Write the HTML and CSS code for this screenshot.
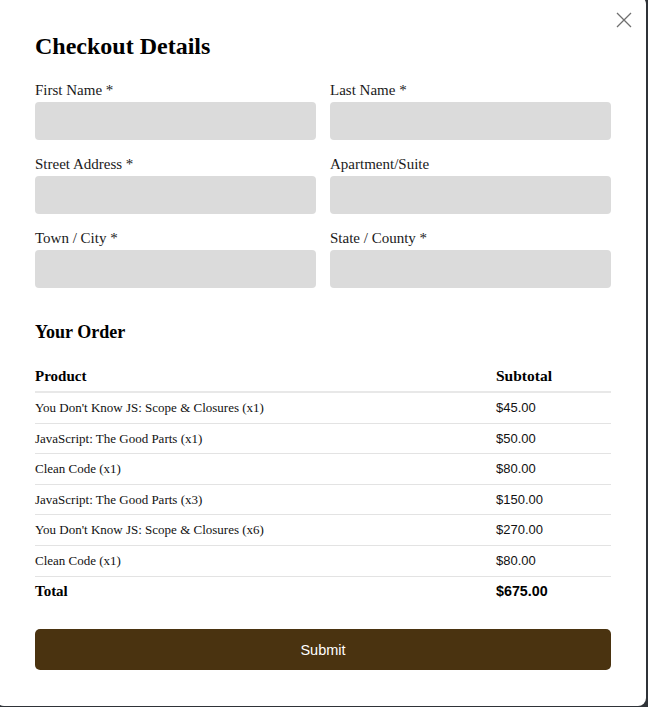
FILE: index.html
```html
<!DOCTYPE html>
<html lang="en">
<head>
<meta charset="utf-8">
<title>Checkout Details</title>
<link rel="stylesheet" href="styles.css">
</head>
<body>
<div class="modal">
  <button class="close" aria-label="Close">
    <svg width="16" height="16" viewBox="0 0 16 16"><path d="M1 1L15 15M15 1L1 15" stroke="#6f6f6f" stroke-width="1.3" fill="none"/></svg>
  </button>
  <h1 class="title">Checkout Details</h1>
  <form class="form">
    <div class="field"><label>First Name *</label><div class="input"></div></div>
    <div class="field"><label>Last Name *</label><div class="input"></div></div>
    <div class="field"><label>Street Address *</label><div class="input"></div></div>
    <div class="field"><label>Apartment/Suite</label><div class="input"></div></div>
    <div class="field"><label>Town / City *</label><div class="input"></div></div>
    <div class="field"><label>State / County *</label><div class="input"></div></div>
  </form>
  <h2 class="subtitle">Your Order</h2>
  <table class="order">
    <thead>
      <tr><th class="c-prod">Product</th><th class="c-sub">Subtotal</th></tr>
    </thead>
    <tbody>
      <tr><td class="c-prod">You Don't Know JS: Scope &amp; Closures (x1)</td><td class="c-sub price">$45.00</td></tr>
      <tr><td class="c-prod">JavaScript: The Good Parts (x1)</td><td class="c-sub price">$50.00</td></tr>
      <tr><td class="c-prod">Clean Code (x1)</td><td class="c-sub price">$80.00</td></tr>
      <tr><td class="c-prod">JavaScript: The Good Parts (x3)</td><td class="c-sub price">$150.00</td></tr>
      <tr><td class="c-prod">You Don't Know JS: Scope &amp; Closures (x6)</td><td class="c-sub price">$270.00</td></tr>
      <tr><td class="c-prod">Clean Code (x1)</td><td class="c-sub price">$80.00</td></tr>
      <tr class="total"><td class="c-prod">Total</td><td class="c-sub price">$675.00</td></tr>
    </tbody>
  </table>
  <button class="submit">Submit</button>
</div>
</body>
</html>
```
FILE: styles.css
```css
html, body {
  margin: 0;
  padding: 0;
}
body {
  background: #2f3338;
  width: 648px;
  height: 707px;
  overflow: hidden;
}
.modal {
  position: relative;
  box-sizing: border-box;
  margin: -4px 0 0 -4px;
  width: 650px;
  height: 710px;
  background: #fff;
  border-radius: 8px;
  padding: 36px 35px 0 39px;
  font-family: "Liberation Serif", "Times New Roman", serif;
  color: #111;
}
.close {
  position: absolute;
  top: 16px;
  right: 14px;
  width: 16px;
  height: 16px;
  padding: 0;
  border: 0;
  background: none;
  display: block;
}
.close svg { display: block; }
.title {
  margin: 0;
  font-size: 24px;
  line-height: 29px;
  font-weight: bold;
  color: #000;
}
.form {
  margin: 20px 0 0;
  display: grid;
  grid-template-columns: 1fr 1fr;
  column-gap: 14px;
  row-gap: 15px;
}
.field {
  display: flex;
  flex-direction: column;
}
.field label {
  font-size: 15px;
  line-height: 18px;
  margin-bottom: 3px;
  color: #1a1a1a;
}
.input {
  height: 38px;
  background: #dbdbdb;
  border-radius: 4px;
}
.subtitle {
  margin: 33px 0 0;
  font-size: 18px;
  line-height: 22px;
  font-weight: bold;
  color: #000;
}
.order {
  margin-top: 18px;
  width: 100%;
  border-collapse: collapse;
}
.order th {
  text-align: left;
  font-size: 15px;
  font-weight: bold;
  line-height: 30px;
  padding: 0;
  border-bottom: 2px solid #e8e8e8;
  color: #000;
}
.order th.c-sub { font-size: 15.5px; }
.order td {
  padding: 0;
  font-size: 13px;
  line-height: 29.6px;
  border-bottom: 1px solid #e3e3e3;
}
.c-sub { width: 115px; }
.price {
  font-family: "Liberation Sans", Arial, sans-serif;
  font-size: 13px;
}
.order tr.total td {
  border-bottom: 0;
  font-weight: bold;
  font-size: 15px;
  color: #000;
}
.order tr.total td.price {
  font-size: 14.3px;
}
.submit {
  display: block;
  margin-top: 23px;
  width: 100%;
  height: 41px;
  border: 0;
  border-radius: 5px;
  background: #4a3310;
  color: #fff;
  font-family: "Liberation Sans", Arial, sans-serif;
  font-size: 14.5px;
}
```
